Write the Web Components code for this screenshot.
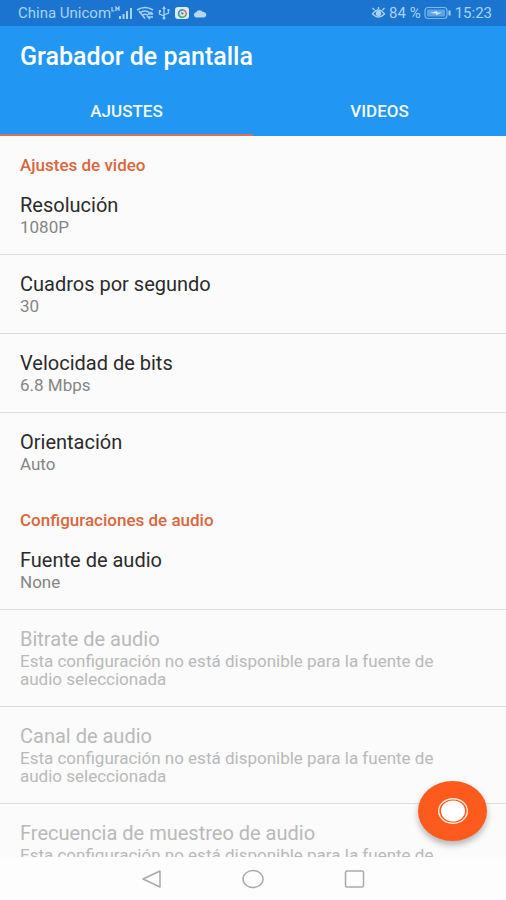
<!DOCTYPE html>
<html lang="es">
<head>
<meta charset="utf-8">
<meta name="viewport" content="width=device-width, initial-scale=1">
<title>Grabador de pantalla</title>
<style>
  html, body { height: 100%; margin: 0; }
  body { font-family: Roboto, "Liberation Sans", sans-serif; background: #fbfbfb; color: #2b2b2b; }
</style>
</head>
<body>
<recorder-app>
  <status-bar slot="top"></status-bar>
  <app-header slot="top" heading="Grabador de pantalla">
    <tab-button selected>AJUSTES</tab-button>
    <tab-button>VIDEOS</tab-button>
  </app-header>

  <pref-category heading="Ajustes de video">
    <pref-item heading="Resolución">1080P</pref-item>
    <pref-item heading="Cuadros por segundo">30</pref-item>
    <pref-item heading="Velocidad de bits">6.8 Mbps</pref-item>
    <pref-item heading="Orientación" last>Auto</pref-item>
  </pref-category>
  <pref-category heading="Configuraciones de audio">
    <pref-item heading="Fuente de audio">None</pref-item>
    <pref-item heading="Bitrate de audio" disabled>Esta configuración no está disponible para la fuente de audio seleccionada</pref-item>
    <pref-item heading="Canal de audio" disabled>Esta configuración no está disponible para la fuente de audio seleccionada</pref-item>
    <pref-item heading="Frecuencia de muestreo de audio" disabled last>Esta configuración no está disponible para la fuente de audio seleccionada</pref-item>
  </pref-category>

  <record-button slot="fab"></record-button>
  <nav-bar slot="bottom"></nav-bar>
</recorder-app>

<script>
  const define = (name, html, setup) => {
    const template = document.createElement('template');
    template.innerHTML = html;
    customElements.define(name, class extends HTMLElement {
      constructor() {
        super();
        this.attachShadow({ mode: 'open' }).append(template.content.cloneNode(true));
      }
      connectedCallback() { if (setup) setup(this, this.shadowRoot); }
    });
  };

  define('recorder-app', `
    <style>
      :host { display: flex; flex-direction: column; height: 100vh; position: relative; }
      main { flex: 1; min-height: 0; overflow-y: auto; scrollbar-width: none; }
    </style>
    <slot name="top"></slot>
    <main><slot></slot></main>
    <slot name="fab"></slot>
    <slot name="bottom"></slot>`);

  define('status-bar', `
    <style>
      :host { display: flex; justify-content: space-between; align-items: center; height: 26px;
        padding: 0 14px 0 18px; background: #1b75d0; color: #a9d2f5; font-size: 15px; line-height: 18px; }
      div { display: flex; align-items: center; }
      svg { display: block; fill: none; stroke: currentColor; }
      .icons { gap: 3px; }
      .right { gap: 3px; }
    </style>
    <div>
      <span>China Unicom</span>
      <div class="icons">
        <svg width="22" height="14" viewBox="0 0 22 14" stroke-width="2">
          <path d="M1 1v4h2.500M5 5V1l1.500 2L8 1v4" stroke-width="1.200"/>
          <path d="M9 13v-3M12.500 13V8M16 13V5M20 13V2" />
        </svg>
        <svg width="18" height="14" viewBox="0 0 18 14" stroke-width="1.500">
          <path d="M1 4Q9-1 17 4M3.500 7Q9 3 14 7M6 9.500Q9 7 12 9.500M9 12.500L3 5M12 8h5M14.500 6l2.500 2M17 11h-5l2 2"/>
        </svg>
        <svg width="14" height="14" viewBox="0 0 14 14" stroke-width="1.300">
          <path d="M7 2v10M2.500 5v3L7 10M11.500 4v3L7 9"/>
          <path d="M7 0L5 3h4zM2 4h2v2H2zM10.500 3h2v2h-2z" fill="currentColor" stroke="none"/><circle cx="7" cy="12" r="1.500" fill="currentColor" stroke="none"/>
        </svg>
        <svg width="16" height="14" viewBox="0 0 16 14">
          <rect x="1" y="1" width="14" height="12" rx="3" fill="#dcecf2" stroke="none"/>
          <path d="M4.500 8a4 4 0 0 1 5-4" stroke="#3b8fc9" stroke-width="1.600"/>
          <path d="M9.500 4a4 4 0 0 1 2.500 5" stroke="#d66a4a" stroke-width="1.600"/>
          <path d="M12 9a4 4 0 0 1-7.500-1" stroke="#4aa66c" stroke-width="1.600"/>
          <path d="M7 6l3 1-2 2z" fill="#55708a" stroke="none"/>
        </svg>
        <svg width="14" height="14" viewBox="0 0 14 14">
          <path d="M3 11.500a2.700 2.700 0 0 1 0-5.300A4 3.800 0 0 1 10 6a3 2.800 0 0 1 1 5.500z" fill="#b5d6f8" stroke="none"/>
        </svg>
      </div>
    </div>
    <div class="right">
      <svg width="15" height="12" viewBox="0 0 14 12" stroke-width="1.400">
        <path d="M1 7Q7-1 13 7Q7 13 1 7zM3 3L1 1M7 2V0M11 3l2-2"/><circle cx="7" cy="6.500" r="2" fill="currentColor"/>
      </svg>
      <span>84 %</span>
      <svg width="28" height="14" viewBox="0 0 28 14">
        <rect x="1" y="1.500" width="22" height="11" rx="3" stroke="#7db8ee" stroke-width="1.200"/>
        <rect x="3" y="3.500" width="18" height="7" rx="1" fill="#5fa4e2" stroke="none"/>
        <path d="M6 7l7-2v1.500h5L12 9V7.500z" fill="#d8ecfc" stroke="none"/>
        <path d="M25.500 4.500v5" stroke-width="2"/>
      </svg>
      <span>15:23</span>
    </div>`);

  define('app-header', `
    <style>
      :host { display: block; background: #2196f3; color: #fff; }
      h1 { margin: 0; padding: 17px 20px 18px; font-size: 25px; line-height: 28px; font-weight: 500; }
      nav { display: flex; }
    </style>
    <h1></h1>
    <nav role="tablist" aria-label="Secciones"><slot></slot></nav>`,
    (el, root) => { root.querySelector('h1').textContent = el.getAttribute('heading'); });

  define('tab-button', `
    <style>
      :host { display: flex; flex: 1; }
      button { flex: 1; height: 47px; padding: 0; border: 0; border-bottom: 2px solid transparent;
        background: none; color: #f0faff; font: 500 17px/45px Roboto, "Liberation Sans", sans-serif; }
      :host([selected]) button { border-color: #d8705f; }
    </style>
    <button role="tab"><slot></slot></button>`,
    (el, root) => root.querySelector('button').setAttribute('aria-selected', el.hasAttribute('selected')));

  define('pref-category', `
    <style>
      :host { display: block; }
      h2 { margin: 0; padding: 19px 20px 1px; font-size: 17px; line-height: 20px; font-weight: 500; color: #d9663c; }
    </style>
    <section><h2></h2><slot></slot></section>`,
    (el, root) => { root.querySelector('h2').textContent = el.getAttribute('heading'); });

  define('pref-item', `
    <style>
      :host { display: block; border-bottom: 1px solid #dedede; }
      :host([last]) { border-bottom: 0; }
      button { display: grid; gap: 2px; width: 100%; padding: 18px 44px 18px 20px; border: 0; background: none;
        text-align: left; font: 17px/18px Roboto, "Liberation Sans", sans-serif; color: #858585; }
      .title { font-size: 20px; line-height: 22px; color: #2b2b2b; }
      :host([disabled]) button, :host([disabled]) .title { color: #b9b9b9; }
    </style>
    <button><span class="title"></span><span><slot></slot></span></button>`,
    (el, root) => {
      root.querySelector('.title').textContent = el.getAttribute('heading');
      root.querySelector('button').disabled = el.hasAttribute('disabled');
    });

  define('record-button', `
    <style>
      :host { position: absolute; right: 19px; bottom: 59px; }
      button { display: grid; place-items: center; width: 69px; height: 60px; padding: 0; border: 0;
        border-radius: 50%; background: #fd5a1e; box-shadow: 0 4px 6px rgba(0,0,0,.28); }
      svg { display: block; }
    </style>
    <button aria-label="Grabar">
      <svg width="32" height="28" viewBox="0 0 32 28">
        <ellipse cx="16" cy="14" rx="14.300" ry="12.300" fill="none" stroke="#ffe9d8" stroke-width="1.400"/>
        <ellipse cx="16" cy="14" rx="12" ry="10.500" fill="#fff"/>
      </svg>
    </button>`);

  define('nav-bar', `
    <style>
      :host { display: block; background: #fdfdfd; }
      nav { display: flex; justify-content: center; gap: 57px; height: 43px; }
      button { display: grid; place-items: center; width: 44px; padding: 0; border: 0; background: none; }
      svg { display: block; fill: none; stroke: #aaa; stroke-width: 1.500; stroke-linejoin: round; }
    </style>
    <nav aria-label="Sistema">
      <button aria-label="Atrás"><svg width="22" height="20" viewBox="0 0 22 20"><path d="M19 2v16L2 10z"/></svg></button>
      <button aria-label="Inicio"><svg width="22" height="20" viewBox="0 0 22 20"><ellipse cx="11" cy="10" rx="10" ry="8.500"/></svg></button>
      <button aria-label="Recientes"><svg width="22" height="20" viewBox="0 0 22 20"><rect x="2.500" y="2" width="18" height="16" rx="1.500"/></svg></button>
    </nav>`);
</script>
</body>
</html>
